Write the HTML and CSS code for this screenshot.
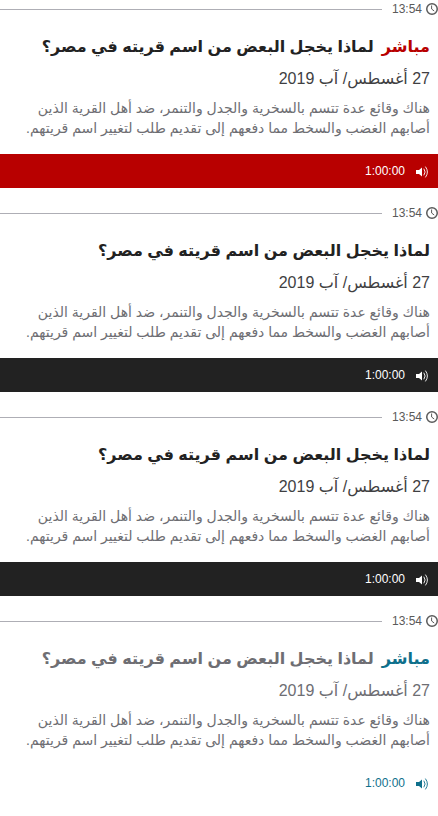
FILE: index.html
```html
<!DOCTYPE html>
<html lang="ar" dir="rtl">
<head>
<meta charset="utf-8">
<title>البرامج</title>
<link rel="stylesheet" href="styles.css">
</head>
<body>
<svg class="defs" aria-hidden="true">
<symbol id="clock" viewBox="0 0 12 12"><circle cx="6" cy="6" r="5.25" fill="none" stroke="currentColor" stroke-width="1.5"/><path d="M5.6 2.5V6l2.6 2" fill="none" stroke="currentColor" stroke-width="1"/></symbol>
<symbol id="sound" viewBox="0 0 12 12"><path d="M0 4h3L6 1.5v9L3 8H0z" fill="currentColor"/><path d="M7.8 2.7q2.6 3.3 0 6.6M9.4 .6q4 5.4 0 10.8" fill="none" stroke="currentColor" stroke-width=".9"/></symbol>
</svg>
<main>
<article class="card live">
<div class="time"><svg class="clock"><use href="#clock"/></svg><time>13:54</time></div>
<div class="body"><h3><span class="label">مباشر</span>لماذا يخجل البعض من اسم قريته في مصر؟</h3><h4>27 أغسطس/ آب 2019</h4><p>هناك وقائع عدة تتسم بالسخرية والجدل والتنمر، ضد أهل القرية الذين أصابهم الغضب والسخط مما دفعهم إلى تقديم طلب لتغيير اسم قريتهم.</p></div>
<div class="bar"><svg class="sound"><use href="#sound"/></svg><span>1:00:00</span></div>
</article>
<article class="card">
<div class="time"><svg class="clock"><use href="#clock"/></svg><time>13:54</time></div>
<div class="body"><h3>لماذا يخجل البعض من اسم قريته في مصر؟</h3><h4>27 أغسطس/ آب 2019</h4><p>هناك وقائع عدة تتسم بالسخرية والجدل والتنمر، ضد أهل القرية الذين أصابهم الغضب والسخط مما دفعهم إلى تقديم طلب لتغيير اسم قريتهم.</p></div>
<div class="bar"><svg class="sound"><use href="#sound"/></svg><span>1:00:00</span></div>
</article>
<article class="card">
<div class="time"><svg class="clock"><use href="#clock"/></svg><time>13:54</time></div>
<div class="body"><h3>لماذا يخجل البعض من اسم قريته في مصر؟</h3><h4>27 أغسطس/ آب 2019</h4><p>هناك وقائع عدة تتسم بالسخرية والجدل والتنمر، ضد أهل القرية الذين أصابهم الغضب والسخط مما دفعهم إلى تقديم طلب لتغيير اسم قريتهم.</p></div>
<div class="bar"><svg class="sound"><use href="#sound"/></svg><span>1:00:00</span></div>
</article>
<article class="card next">
<div class="time"><svg class="clock"><use href="#clock"/></svg><time>13:54</time></div>
<div class="body"><h3><span class="label">مباشر</span>لماذا يخجل البعض من اسم قريته في مصر؟</h3><h4>27 أغسطس/ آب 2019</h4><p>هناك وقائع عدة تتسم بالسخرية والجدل والتنمر، ضد أهل القرية الذين أصابهم الغضب والسخط مما دفعهم إلى تقديم طلب لتغيير اسم قريتهم.</p></div>
<div class="bar"><svg class="sound"><use href="#sound"/></svg><span>1:00:00</span></div>
</article>
</main>
</body>
</html>
```
FILE: styles.css
```css
body { margin: 0; background: #fff; font-family: "Liberation Sans", "DejaVu Sans", sans-serif; color: #222; }
.defs { display: block; width: 0; height: 0; }
.card { height: 204px; }
.time { display: flex; align-items: center; height: 18px; color: #5a5a5a; font-size: 12px; line-height: 18px; }
.time::after { content: ""; flex: 1; height: 1px; background: #aeaeb5; margin-right: 10px; }
.clock { width: 12px; height: 12px; margin-left: 4px; }
.body { box-sizing: border-box; height: 136px; padding: 19px 8px 0; }
h3, h4, p { margin: 0; }
h3 { font-size: 16px; line-height: 20px; }
.label { color: #b80000; margin-left: 8px; }
h4 { font-size: 16px; line-height: 20px; margin-top: 12px; font-weight: 400; color: #3f3f42; }
p { font-size: 14px; line-height: 20px; margin-top: 9px; color: #6e6e73; }
.bar { display: flex; align-items: center; height: 34px; padding-right: 10px; background: #222; color: #fff; font-size: 12px; }
.sound { width: 12px; height: 12px; margin: 2px 0 0 11px; }
.live .bar { background: #b80000; }
.next .label { color: #0f708c; }
.next h3, .next h4 { color: #6e6e73; }
.next .bar { background: #fff; color: #0f708c; }
```
